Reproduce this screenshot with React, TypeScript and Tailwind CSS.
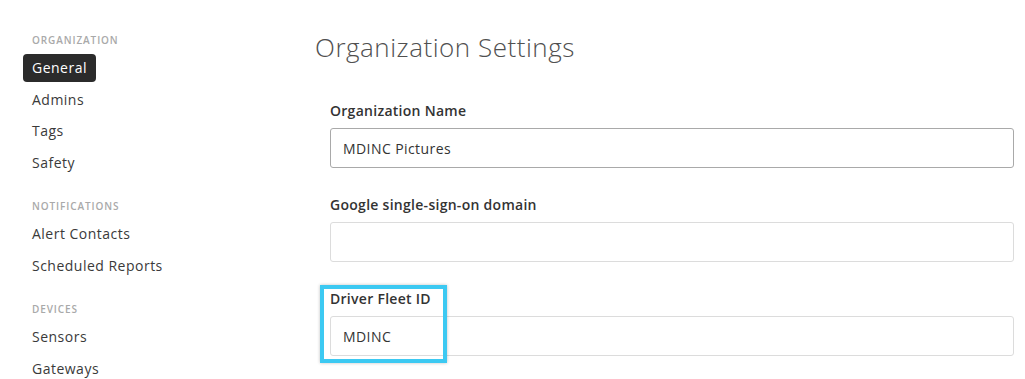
const sections = [
  { title: "Organization", items: ["General", "Admins", "Tags", "Safety"] },
  { title: "Notifications", items: ["Alert Contacts", "Scheduled Reports"] },
  { title: "Devices", items: ["Sensors", "Gateways"] },
];

const fields = [
  { label: "Organization Name", value: "MDINC Pictures", active: true },
  { label: "Google single-sign-on domain", value: "", active: false },
  { label: "Driver Fleet ID", value: "MDINC", active: false },
];

export default function App() {
  return (
    <div
      className="flex w-[1025px] h-[379px] overflow-hidden bg-white text-[#333]"
      style={{ fontFamily: '"Open Sans", "Noto Sans", sans-serif' }}
    >
      {/* Sidebar */}
      <nav className="w-[291px] shrink-0 pl-[23px] pt-[28px]">
        {sections.map((section, i) => (
          <div key={section.title} className={i > 0 ? "mt-[16px]" : ""}>
            <div className="h-[24px] flex items-center pl-[9px] text-[10px] font-semibold uppercase tracking-[0.09em] text-[#a9a9a9]">
              {section.title}
            </div>
            {section.items.map((item) => (
              <div key={item} className="h-[31.5px] flex items-center">
                {item === "General" ? (
                  <span className="h-[28px] flex items-center px-[9px] rounded-[4px] bg-[#2b2b2b] text-white text-[14px] tracking-[0.035em]">
                    {item}
                  </span>
                ) : (
                  <span className="px-[9px] text-[14px] tracking-[0.035em] text-[#3a3a3a]">{item}</span>
                )}
              </div>
            ))}
          </div>
        ))}
      </nav>

      {/* Main */}
      <main className="flex-1 pt-[31px] pr-[11px]">
        <h1 className="pl-[24px] text-[26px] leading-[32px] font-light tracking-[0.02em] text-[#505050]">
          Organization Settings
        </h1>
        <div className="pl-[39px] pt-[38px]">
          {fields.map((field, i) => (
            <div key={field.label} className={`relative ${i > 0 ? "mt-[27px]" : ""}`}>
              <label className="block text-[14px] leading-[20px] font-semibold tracking-[0.02em] text-[#333]">
                {field.label}
              </label>
              <div
                className={`mt-[7px] h-[40px] flex items-center px-[12px] rounded-[3px] border bg-white text-[14px] tracking-[0.03em] text-[#333] ${
                  field.active ? "border-[#a9a9a9]" : "border-[#dcdcdc]"
                }`}
              >
                {field.value}
              </div>
              {field.label === "Driver Fleet ID" && (
                <div className="absolute left-[-10px] top-[-4px] w-[127px] h-[78px] border-[4px] border-[#3cc9f2] shadow-[0_0_3px_rgba(0,0,0,0.25)]" />
              )}
            </div>
          ))}
        </div>
      </main>
    </div>
  );
}
